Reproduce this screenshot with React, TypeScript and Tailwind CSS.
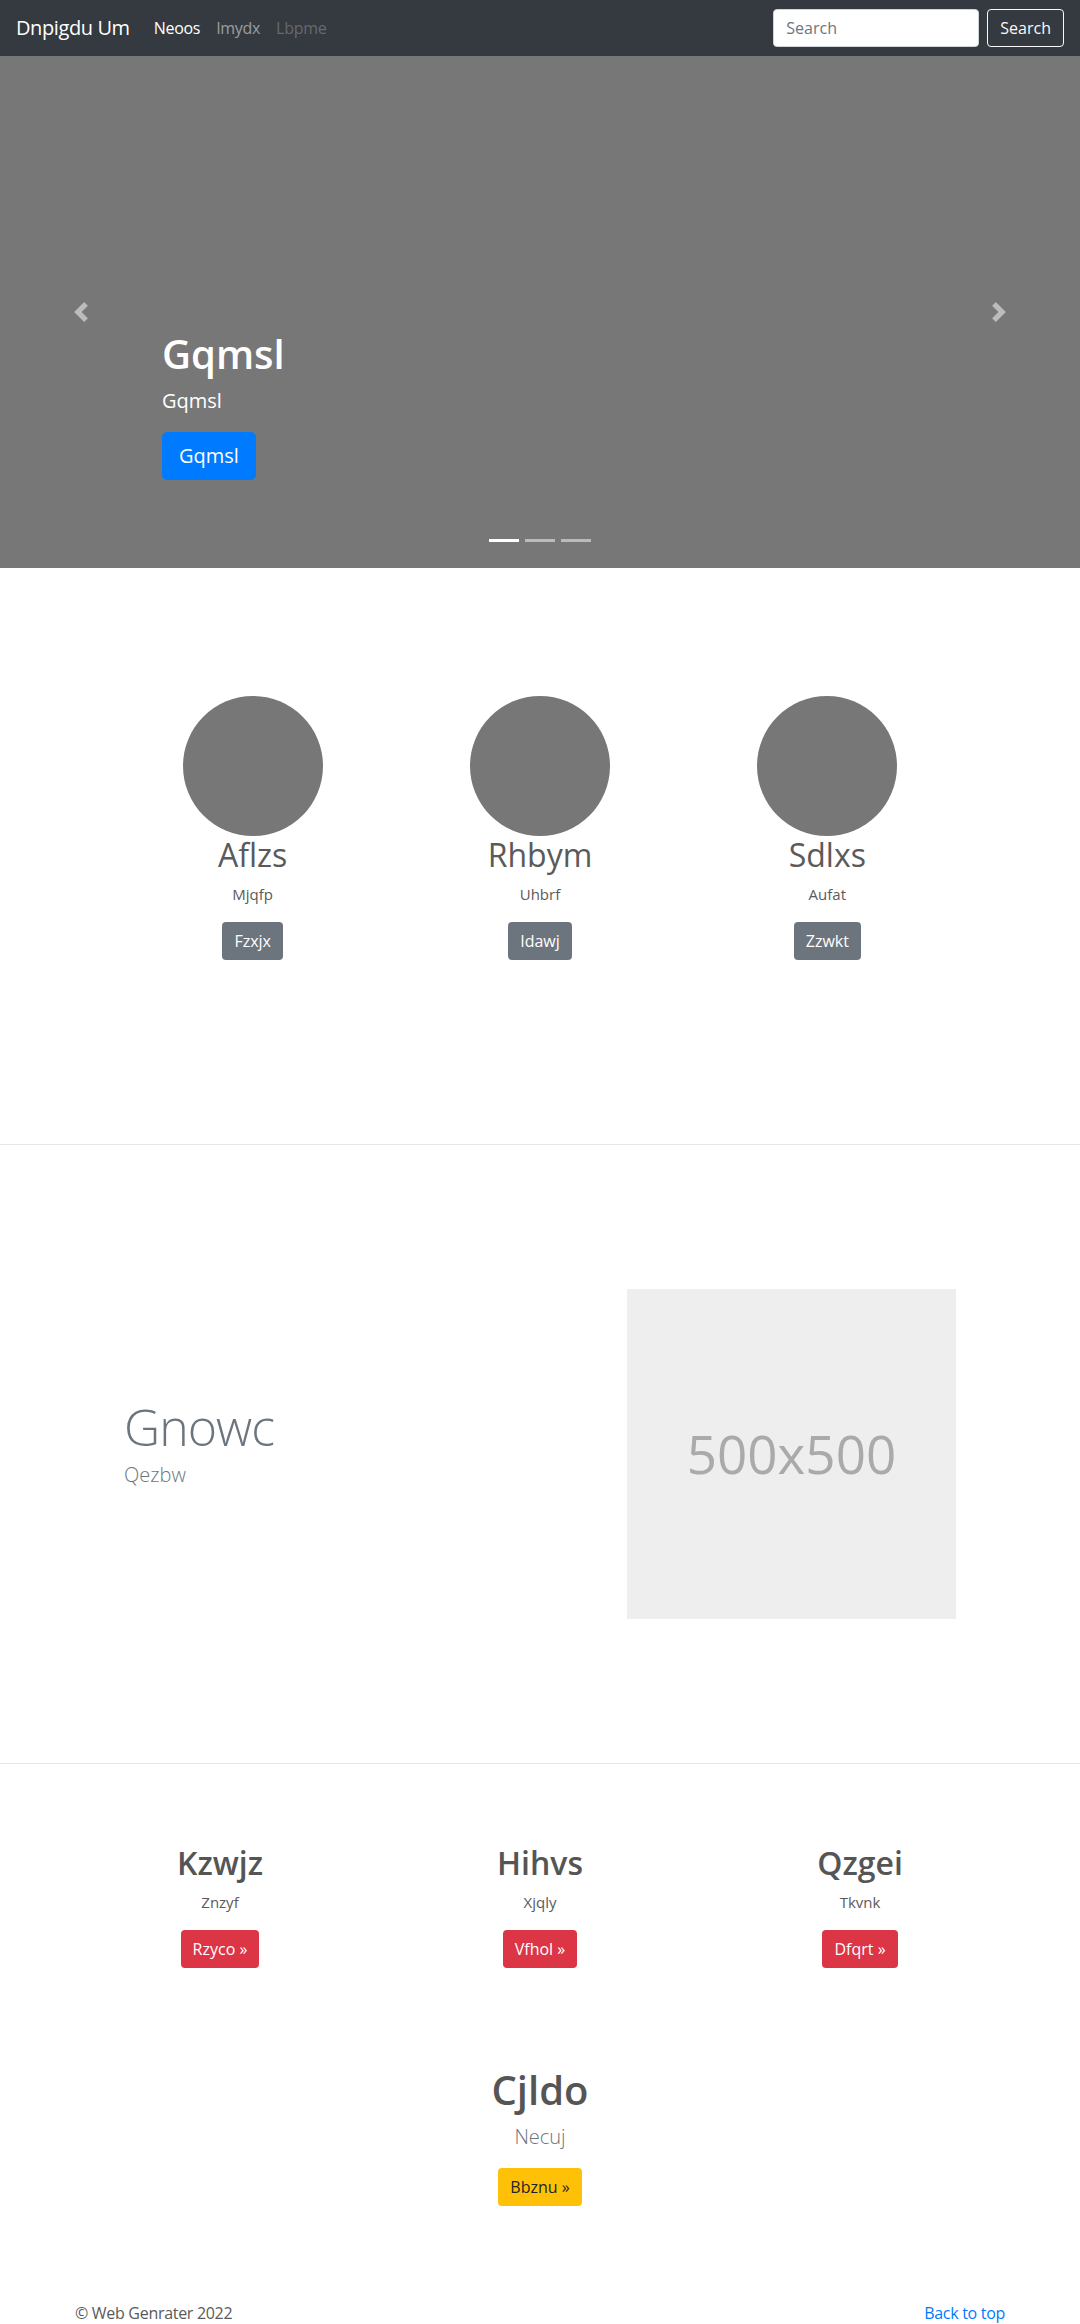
import React from "react";

const marketing = [
  { title: "Aflzs", text: "Mjqfp", btn: "Fzxjx" },
  { title: "Rhbym", text: "Uhbrf", btn: "Idawj" },
  { title: "Sdlxs", text: "Aufat", btn: "Zzwkt" },
];

const features = [
  { title: "Kzwjz", text: "Znzyf", btn: "Rzyco" },
  { title: "Hihvs", text: "Xjqly", btn: "Vfhol" },
  { title: "Qzgei", text: "Tkvnk", btn: "Dfqrt" },
];

function Chevron({ dir }: { dir: "prev" | "next" }) {
  const d =
    dir === "prev"
      ? "M5.25 0l-4 4 4 4 1.5-1.5L4.25 4l2.5-2.5L5.25 0z"
      : "M2.75 0l-1.5 1.5L3.75 4l-2.5 2.5L2.75 8l4-4-4-4z";
  return (
    <svg width="20" height="20" viewBox="0 0 8 8" className="opacity-50">
      <path d={d} fill="#fff" />
    </svg>
  );
}

export default function App() {
  return (
    <div className="min-h-screen bg-white font-['Open_Sans',sans-serif] text-[#5a5a5a]">
      <nav className="flex h-14 items-center justify-between bg-[#343a40] px-4">
        <div className="flex items-center">
          <a className="mr-4 text-[20px] leading-[30px] tracking-[-0.4px] text-white">Dnpigdu Um</a>
          <ul className="flex text-[16px] leading-6 tracking-[-0.3px]">
            <li className="px-2 text-white">Neoos</li>
            <li className="px-2 text-white/50">Imydx</li>
            <li className="px-2 text-white/25">Lbpme</li>
          </ul>
        </div>
        <form className="flex items-center">
          <input
            placeholder="Search"
            className="mr-2 h-[38px] w-[206px] rounded border border-[#ced4da] bg-white px-3 text-[16px] text-[#495057] placeholder:text-[#6c757d]"
          />
          <button
            type="button"
            className="h-[38px] rounded border border-[#f8f9fa] px-3 text-[16px] text-[#f8f9fa]"
          >
            Search
          </button>
        </form>
      </nav>

      {/* carousel */}
      <section className="relative h-[512px] bg-[#777]">
        <div className="absolute inset-y-0 left-0 flex w-[15%] items-center justify-center">
          <Chevron dir="prev" />
        </div>
        <div className="absolute inset-y-0 right-0 flex w-[15%] items-center justify-center">
          <Chevron dir="next" />
        </div>
        <div className="absolute bottom-[52px] left-[15%] right-[15%] py-5 text-white">
          <h1 className="mb-2 text-[40px] font-semibold leading-[48px]">Gqmsl</h1>
          <p className="mb-4 text-[20px] leading-[30px]">Gqmsl</p>
          <p className="mb-4">
            <a className="inline-block rounded-[5px] border border-[#007bff] bg-[#007bff] px-4 py-2 text-[20px] leading-[30px] text-white">
              Gqmsl
            </a>
          </p>
        </div>
        <ol className="absolute bottom-4 left-0 right-0 flex justify-center">
          <li className="mx-[3px] my-[10px] h-[3px] w-[30px] bg-white" />
          <li className="mx-[3px] my-[10px] h-[3px] w-[30px] bg-white opacity-50" />
          <li className="mx-[3px] my-[10px] h-[3px] w-[30px] bg-white opacity-50" />
        </ol>
      </section>

      {/* marketing circles */}
      <div className="mx-auto grid w-[862px] grid-cols-3 pt-32 text-center">
        {marketing.map((m) => (
          <div key={m.title} className="flex flex-col items-center">
            <div className="h-[140px] w-[140px] rounded-full bg-[#777]" />
            <h2 className="mb-2 text-[32px] font-normal leading-[38px]">{m.title}</h2>
            <p className="mb-4 text-[15px] leading-6">{m.text}</p>
            <a className="rounded bg-[#6c757d] px-3 py-[7px] text-[16px] leading-6 text-white">
              {m.btn}
            </a>
          </div>
        ))}
      </div>

      <hr className="mt-[184px] border-[#e6e6e6]" />

      {/* featurette */}
      <div className="mx-auto flex w-[862px] items-center py-[144px]">
        <div className="w-[503px] px-[15px]">
          <h2 className="mb-2 text-[50px] font-light leading-none tracking-[-1px] text-[#6c757d]">
            Gnowc
          </h2>
          <p className="mb-4 text-[20px] font-light leading-[30px] text-[#6c757d]">Qezbw</p>
        </div>
        <div className="w-[359px] px-[15px]">
          <div className="flex h-[330px] w-[329px] items-center justify-center bg-[#eee] text-[53px] text-[#aaa]">
            500x500
          </div>
        </div>
      </div>

      <hr className="border-[#e6e6e6]" />

      {/* bottom features */}
      <div className="mx-auto grid w-[960px] grid-cols-3 pt-20 text-center">
        {features.map((f) => (
          <div key={f.title} className="flex flex-col items-center">
            <h2 className="mb-2 text-[32px] font-semibold leading-[38px] text-[#555]">{f.title}</h2>
            <p className="mb-4 text-[15px] leading-6">{f.text}</p>
            <a className="rounded bg-[#dc3545] px-3 py-[7px] text-[16px] leading-6 text-white">
              {f.btn} &raquo;
            </a>
          </div>
        ))}
      </div>

      <div className="mt-[98px] flex flex-col items-center text-center">
        <h1 className="mb-2 text-[40px] font-semibold leading-[48px] text-[#555]">Cjldo</h1>
        <p className="mb-4 text-[20px] font-light leading-[30px] text-[#6c757d]">Necuj</p>
        <a className="rounded bg-[#ffc107] px-3 py-[7px] text-[16px] leading-6 text-[#212529]">
          Bbznu &raquo;
        </a>
      </div>

      <footer className="mx-auto flex w-[930px] justify-between pb-4 pt-[95px] text-[16px] leading-6 tracking-[-0.3px]">
        <p>&copy; Web Genrater 2022</p>
        <a className="text-[#007bff]">Back to top</a>
      </footer>
    </div>
  );
}
